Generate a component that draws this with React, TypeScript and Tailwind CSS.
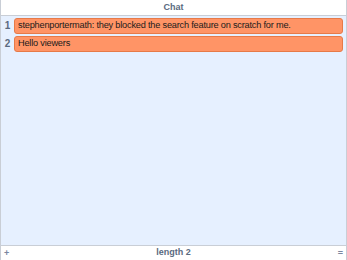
const items = ['stephenportermath: they blocked the search feature on scratch for me.', 'Hello viewers']

export default function App() {
  return (
    <div
      className="flex h-[260px] w-[347px] flex-col overflow-hidden border-x border-[#c9ced6] bg-white text-[9px]"
      style={{ fontFamily: '"Liberation Sans", Arial, sans-serif' }}
    >
      <div className="flex h-[16px] shrink-0 items-center justify-center border-b border-[#c9ced6] font-bold text-[#5a6a80]">
        Chat
      </div>
      <div className="flex-1 bg-[#e6f0ff] pt-[1px]">
        {items.map((item, i) => (
          <div key={i} className="mb-[1px] flex h-[17px] items-center pr-[3px]">
            <span className="w-[13px] shrink-0 text-center text-[10px] font-bold text-[#5a6a80]">{i + 1}</span>
            <div className="flex h-[16px] flex-1 items-center truncate rounded-[3px] border border-[#e67a48] bg-[#ff9466] px-[3px] text-[9.2px] tracking-[-0.2px] text-[#1b1b1b]">
              {item}
            </div>
          </div>
        ))}
      </div>
      <div className="relative flex h-[15px] shrink-0 items-center justify-center border-t border-[#c9ced6] font-bold text-[#5a6a80]">
        <span className="absolute left-[3px] text-[9px] leading-none text-[#7a86a0]">+</span>
        length 2
        <span className="absolute right-[3px] text-[9px] leading-none text-[#7a86a0]">=</span>
      </div>
    </div>
  )
}
